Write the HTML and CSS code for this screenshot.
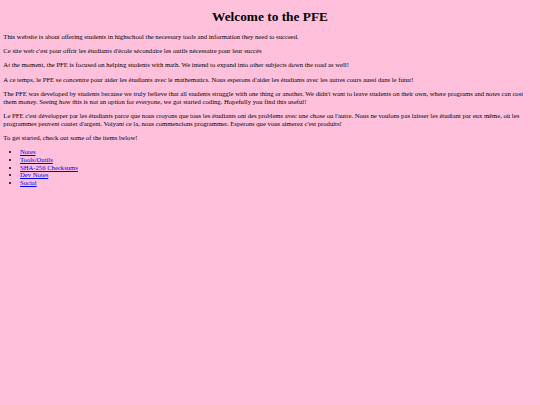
FILE: index.html
```html
<!DOCTYPE html>
<html>
<head>
<meta charset="utf-8">
<title>PFE</title>
<link rel="stylesheet" href="styles.css">
</head>
<body class="page">
<h1 class="title">Welcome to the PFE</h1>
<p class="text">This website is about offering students in highschool the necessary tools and information they need to succeed.</p>
<p class="text">Ce site web c'est pour offrir les étudiants d'école sécondaire les outils nécessaire pour leur succès</p>
<p class="text">At the moment, the PFE is focused on helping students with math. We intend to expand into other subjects down the road as well!</p>
<p class="text">A ce temps, le PFE se concentre pour aider les étudiants avec le mathematics. Nous esperons d'aider les étudiants avec les autres cours aussi dans le futur!</p>
<p class="text">The PFE was developed by students because we truly believe that all students struggle with one thing or another. We didn't want to leave students on their own, where programs and notes can cost them money. Seeing how this is not an option for everyone, we got started coding. Hopefully you find this useful!</p>
<p class="text">Le PFE c'est développer par les étudiants parce que nous croyons que tous les étudiants ont des problems avec une chose ou l'autre. Nous ne voulons pas laisser les étudiant par eux même, où les programmes peuvent couter d'argent. Voiyant ce la, nous commencions programmer. Esperons que vous aimerez c'est produits!</p>
<p class="text">To get started, check out some of the items below!</p>
<ul class="links">
<li><a class="link" href="#">Notes</a></li>
<li><a class="link" href="#">Tools/Outils</a></li>
<li><a class="link" href="#">SHA-256 Checksums</a></li>
<li><a class="link" href="#">Dev Notes</a></li>
<li><a class="link" href="#">Social</a></li>
</ul>
</body>
</html>
```
FILE: styles.css
```css
html {
  background: #ffc0dc;
}
.page {
  margin: 3.333px;
  font-family: "Liberation Serif", "DejaVu Serif", serif;
  font-size: 6.667px;
  line-height: 7.667px;
  color: #000;
}
.title {
  font-size: 13.333px;
  line-height: 15.333px;
  margin: 5.5px 0 8.6px;
  text-align: center;
  font-weight: bold;
}
.text {
  margin: 6.667px 0;
}
.links {
  margin: 6.667px 0;
  padding-left: 16.667px;
}
.link {
  color: #0000ee;
}
```
